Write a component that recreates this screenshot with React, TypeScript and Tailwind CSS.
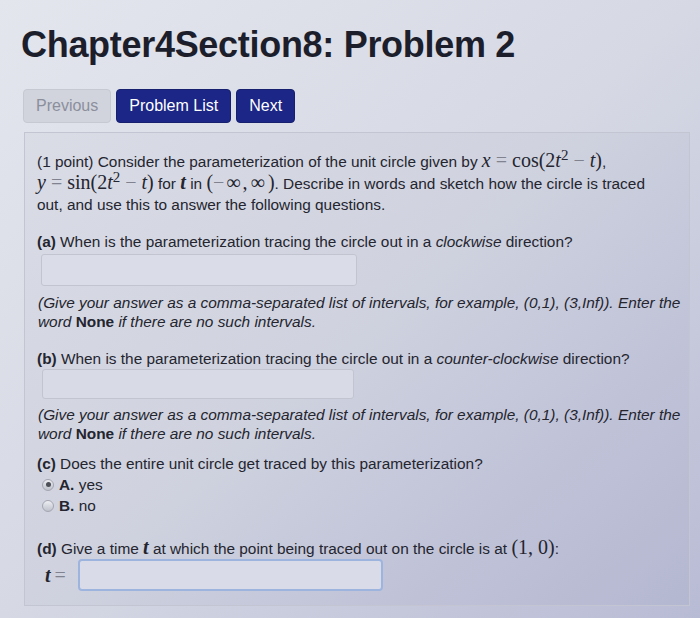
import type { ReactNode } from "react";

const M = ({ children }: { children: ReactNode }) => (
  <span className="font-['Liberation_Serif','DejaVu_Serif',serif] text-[20px] leading-none">
    {children}
  </span>
);

const V = ({ children, bold }: { children: ReactNode; bold?: boolean }) => (
  <i className={bold ? "font-bold" : "font-normal"}>{children}</i>
);

const Op = ({ children }: { children: ReactNode }) => (
  <span className="mx-[5px] text-[#80838f]">{children}</span>
);

const NavButton = ({ label, muted }: { label: string; muted?: boolean }) => (
  <button
    type="button"
    className={
      muted
        ? "flex h-[34px] items-center rounded-[4px] border border-[#c6c9d2] bg-[#d1d4dc] px-[12px] text-[#8b8f9c]"
        : "flex h-[34px] items-center rounded-[4px] border border-[#16206f] bg-[#1b2686] px-[12px] text-white"
    }
  >
    {label}
  </button>
);

const Radio = ({ checked }: { checked?: boolean }) => (
  <span className="flex h-[12px] w-[12px] items-center justify-center rounded-full border border-[#a3a6b0] bg-gradient-to-b from-[#eceef2] to-[#bfc2cb]">
    {checked && <span className="h-[5px] w-[5px] rounded-full bg-[#4d4f57]" />}
  </span>
);

const Hint = () => (
  <p className="ml-[1px] italic leading-[19px]">
    (Give your answer as a comma-separated list of intervals, for example, (0,1), (3,Inf)). Enter the
    <br />
    word <b className="not-italic">None</b> if there are no such intervals.
  </p>
);

export default function App() {
  return (
    <div className="h-[618px] w-[700px] overflow-hidden bg-gradient-to-br from-[#e3e6ed] via-[#d6d9e4] to-[#b8bbd4] font-['Liberation_Sans',Arial,sans-serif] text-[15.4px] text-[#24252f]">
      <div className="pl-[21px] pt-[27px]">
        <h1 className="text-[36px] font-bold leading-[36px] tracking-[-0.3px] text-[#1c1e2c]">
          Chapter4Section8: Problem 2
        </h1>
        <div className="ml-[2px] mt-[26px] flex gap-[5px] text-[16px]">
          <NavButton label="Previous" muted />
          <NavButton label="Problem List" />
          <NavButton label="Next" />
        </div>

        <div className="ml-[3px] mt-[9px] w-[666px] border border-[#c3c6d2] bg-[#1e2a6a]/[0.03] pb-[14px] pl-[12px] pt-[17px]">
          <p className="whitespace-nowrap leading-[21px]">
            (1 point) Consider the parameterization of the unit circle given by{" "}
            <M>
              <V>x</V>
              <Op>=</Op>cos(2<V>t</V>
              <sup>2</sup>
              <Op>−</Op>
              <V>t</V>)
            </M>
            ,
            <br />
            <M>
              <V>y</V>
              <Op>=</Op>sin(2<V>t</V>
              <sup>2</sup>
              <Op>−</Op>
              <V>t</V>)
            </M>{" "}
            for{" "}
            <M>
              <V bold>t</V>
            </M>{" "}
            in{" "}
            <M>
              (<span className="text-[#80838f]">−</span>
              <span className="px-[2px]">∞</span>,<span className="px-[3px]">∞</span>)
            </M>
            . Describe in words and sketch how the circle is traced
            <br />
            out, and use this to answer the following questions.
          </p>

          <p className="mt-[17px] leading-[20px]">
            <b>(a)</b> When is the parameterization tracing the circle out in a <i>clockwise</i> direction?
          </p>
          <input
            type="text"
            readOnly
            className="ml-[4px] mt-[2px] block h-[32px] w-[316px] rounded-[3px] border border-[#c2c5d0] bg-[#dadde7] outline-none"
          />
          <div className="mt-[7px]">
            <Hint />
          </div>

          <p className="mt-[18px] leading-[20px]">
            <b>(b)</b> When is the parameterization tracing the circle out in a <i>counter-clockwise</i> direction?
          </p>
          <input
            type="text"
            readOnly
            className="ml-[5px] block h-[30px] w-[312px] rounded-[3px] border border-[#c2c5d0] bg-[#d8dbe6] outline-none"
          />
          <div className="mt-[6px]">
            <Hint />
          </div>

          <p className="mt-[11px] leading-[20px]">
            <b>(c)</b> Does the entire unit circle get traced by this parameterization?
          </p>
          <div className="ml-[5px] flex flex-col">
            <label className="flex h-[21px] items-center gap-[5px]">
              <Radio checked />
              <span>
                <b>A.</b> yes
              </span>
            </label>
            <label className="flex h-[22px] items-center gap-[5px]">
              <Radio />
              <span>
                <b>B.</b> no
              </span>
            </label>
          </div>

          <p className="mt-[20px] leading-[20px]">
            <b>(d)</b> Give a time{" "}
            <M>
              <V bold>t</V>
            </M>{" "}
            at which the point being traced out on the circle is at{" "}
            <M>(1, 0)</M>:
          </p>
          <div className="ml-[8px] flex items-center">
            <M>
              <V bold>t</V>
              <span className="ml-[4px] text-[#80838f]">=</span>
            </M>
            <input
              type="text"
              readOnly
              className="ml-[12px] block h-[32px] w-[305px] rounded-[4px] border-2 border-[#9db4df] bg-[#d9dce8] outline-none"
            />
          </div>
        </div>
      </div>
    </div>
  );
}
